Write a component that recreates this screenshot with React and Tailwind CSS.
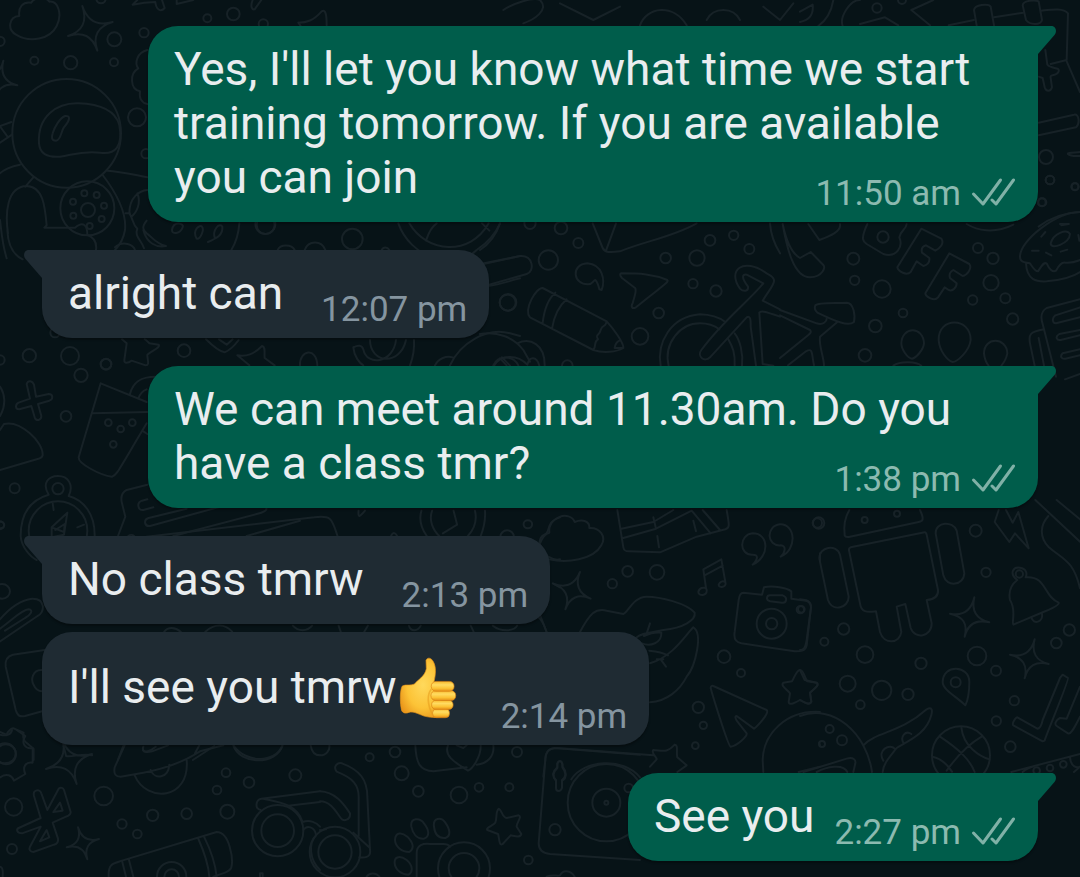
import React from "react";

const layers = [
  {
    at: "translate(0 0) scale(.33333)",
    circles: [[343,118,21],[432,98,14],[212,188,20],[103,182,12],[342,187,12],[622,55,12],[700,42,19],[790,72,14],[411,352,27],[438,461,14],[0,124,14],[797,675,27],[200,400,163],[262,625,81],[264,630,21],[253,580,9],[290,585,9],[312,617,9],[305,657,9],[269,678,9],[220,647,9],[219,605,9],[303,-4,14]],
    sparks: [[247,18,338,66,292,152,204,108],[10,182,52,256,-20,310,-60,220]],
    paths: [
      "M58 48C25 50 22 90 48 104C90 130 150 118 170 78C188 42 174 2 148 5C132-16 100-4 94 8C68 4 54 22 58 48Z",
      "M117 430C112 350 170 308 235 310C300 312 345 330 358 375C370 440 345 465 300 458C240 452 215 466 180 470C140 473 119 460 117 430Z",
      "M158 400C164 380 180 354 195 348C214 346 208 362 195 378C182 390 185 420 168 422C154 422 154 412 158 400Z",
      "M60 494C30 500 10 510 0 520M100 532L76 560M24 700C15 640 20 560 80 558C130 560 135 620 140 676L133 683H225C250 662 262 675 262 705C290 715 290 735 288 750M22 690C24 740 40 765 68 778M0 660C4 690 6 730 20 775",
      "M308 525C350 580 380 640 375 690C370 720 355 740 345 750M322 512C360 514 400 524 442 532M0 378L34 366M2 382L24 412M0 428L36 404",
      "M442 150C410 158 403 190 415 205C388 220 390 268 420 274C416 300 430 310 442 312",
      "M442 570C420 572 388 590 388 640C402 660 395 670 412 686C402 710 425 720 432 745M412 580C425 610 408 640 394 650M376 640H390M440 662C425 680 428 690 440 700C458 712 465 730 498 738C470 744 440 730 430 690M345 742C370 720 400 735 405 750",
      "M516 690C520 660 555 670 548 682C540 702 515 704 516 690ZM590 716C575 690 600 672 606 680C614 690 600 720 590 716ZM645 715C635 690 660 665 667 680C670 705 650 715 624 726M718 670C716 700 706 730 694 750",
      "M398 14L412 0M398 14C425 8 450 6 466 6C468 28 482 38 494 24L486 0M530 0V12L580 0M758 0C750 20 756 30 764 28L784 0M895 68C920 68 940 62 965 34C976 28 980 40 980 76M895 68L902 78",
    ],
  },
  {
    at: "translate(100 210) scale(.33333)",
    circles: [[757,87,31],[496,42,30],[252,422,19],[18,463,16],[1223,278,24]],
    sparks: [],
    paths: [
      "M533 120C540 102 575 102 584 120M614 120C625 90 665 90 676 120M845 120C850 110 862 110 868 120",
      "M895 40C930 140 1060 190 1130 120C1160 100 1185 75 1200 40M928 40C980 130 1110 140 1166 40M978 92C985 70 995 50 1010 40M1146 40L1168 62",
      "M1150 162L1260 138M1164 228C1200 224 1230 212 1260 205",
      "M66 388L80 400L73 450C72 462 84 460 95 452L137 466C150 466 142 450 142 434C160 420 182 412 176 404L148 400C140 392 136 388 134 388",
      "M318 388C340 410 360 425 374 427C390 420 405 405 416 390M357 388L380 404L398 388",
      "M412 436C440 440 460 434 486 408C498 410 492 430 494 444L524 466M412 436L448 466",
      "M600 466C598 420 650 410 652 466M760 412C775 405 785 405 790 418C800 470 880 460 888 390M810 390C810 460 900 470 918 390M760 412C762 440 780 460 790 466M942 390C944 420 938 445 930 466",
      "M1050 466C1080 400 1160 350 1230 370L1260 378M1005 466C1015 445 1040 436 1058 442M1180 466C1195 435 1240 435 1255 466M1200 445L1220 466",
    ],
  },
  {
    at: "translate(480 220) scale(.33333)",
    circles: [[205,120,29],[84,247,25],[243,24,19],[295,69,15],[557,114,16],[651,114,23],[690,61,16],[761,46,14],[808,87,15],[639,191,14],[708,213,17],[536,279,16],[480,349,25],[150,10,17],[262,437,16]],
    sparks: [],
    paths: [
      "M12 130L120 108C160 104 165 155 140 162L25 195M0 90C30 70 50 40 60 10",
      "M338 10L368 84C374 98 390 98 420 94C500 62 580 50 650 10M408 10L378 92",
      "M365 210C376 180 368 134 322 130C270 134 280 195 325 193C338 193 340 180 346 180C354 188 356 200 358 208Z",
      "M424 160C480 160 520 162 562 180C570 186 530 210 468 262C456 268 452 260 458 250C464 225 470 215 466 205L426 174C418 165 420 161 424 160Z",
      "M188 204C168 202 130 270 150 292L340 390C370 400 410 396 430 384C432 370 400 325 380 304ZM226 218C200 240 192 275 188 308M260 238C232 262 222 290 216 326M380 304C376 325 368 310 362 330C358 350 344 340 354 358C340 365 350 378 340 390M430 384L404 384C406 370 410 366 418 362",
      "M542 437C530 370 570 290 660 283C700 284 720 294 736 306M786 437C790 400 780 360 764 340M566 437C550 370 600 310 660 310C690 310 705 318 718 328M764 437C766 400 758 380 744 356",
      "M850 190C810 240 730 300 664 390C650 410 674 428 690 412L800 292C814 284 812 310 812 320L828 437M850 190L800 164C784 162 786 176 804 200C806 215 790 216 780 206C740 150 790 110 860 160C900 180 880 190 848 242L900 268M838 278C842 272 850 272 900 290M838 278L848 432L880 437",
      "M870 10C872 40 882 70 900 100M0 342C50 334 100 350 130 390L150 425M112 370C150 352 195 372 194 437M42 437C60 405 110 400 142 434C148 408 170 408 178 437M66 412L90 437",
    ],
  },
  {
    at: "translate(780 180) scale(.33333)",
    circles: [[220,236,18],[224,301,14],[306,327,26],[309,171,17],[369,399,13],[286,438,19],[255,526,19],[594,204,15],[639,235,17],[633,308,23],[676,355,15],[578,360,14],[698,417,17],[785,67,12],[885,20,10],[810,0,13]],
    sparks: [],
    paths: [
      "M8 132C20 200 40 292 90 292C130 290 136 262 130 255L92 216L60 234C35 220 18 180 8 132ZM85 132L118 180C150 168 184 155 180 132",
      "M262 132C240 180 250 185 260 192L310 222C350 234 370 200 358 172C362 150 378 150 380 132",
      "M424 146L484 176C494 190 480 204 466 212L438 196C424 200 424 210 426 218L448 234C450 250 438 256 430 258L410 244L392 276C380 288 355 275 352 262Z",
      "M508 220L568 252C578 266 560 286 548 288L520 270C506 278 508 288 510 294L530 310C530 325 515 335 506 330L494 322L474 352C464 366 436 350 436 340Z",
      "M560 132C590 150 640 164 700 134M900 96C830 96 720 180 720 230C720 250 740 246 750 250C758 262 765 274 774 274C785 258 790 246 800 250C808 268 818 278 828 272C838 254 845 246 856 248C880 250 890 244 900 240M738 250C740 300 770 306 800 304C840 300 880 290 900 276M812 190C820 160 860 145 870 162C868 190 812 212 812 190ZM784 170L796 156M840 132H866M756 212H776M798 218L814 226M842 215L862 209M895 165L898 182",
      "M0 390L110 430C130 436 140 424 140 416M0 406L90 450C96 456 90 460 86 464L0 534M172 426L120 470C116 500 132 530 132 558M24 556L78 514C100 502 94 520 102 556",
      "M106 376C116 366 160 370 200 368C222 368 226 410 222 426C205 440 170 426 112 398C104 390 102 384 106 376Z",
      "M364 490C366 438 430 438 432 490C430 510 408 534 396 536C382 534 364 508 364 490ZM476 480C474 410 572 410 572 480C568 515 530 546 518 546C502 542 478 512 476 480ZM612 520C612 470 680 470 682 520C678 540 670 550 664 557M612 520C614 540 620 550 626 557M340 557C360 542 410 544 424 557",
      "M900 358L800 384C780 396 784 420 788 432L828 590M900 382L826 406C814 416 818 430 828 430L900 412M900 450L838 462C824 470 830 482 842 480L900 466M900 508L848 520C838 530 846 538 856 536L900 526M792 448C750 456 745 462 750 490L764 557M776 474L792 557M855 598L900 582",
    ],
  },
  {
    at: "translate(800 0) scale(.33333)",
    circles: [[231,24,14],[306,0,12],[738,471,21],[750,540,13],[825,560,11],[727,607,12]],
    sparks: [],
    paths: [
      "M0 35L38 14C42 50 20 62 0 66M100 0C95 30 80 60 55 78M128 78C118 50 150 0 180 0M180 72L255 52L295 76M334 30L400 0M334 30L390 76M446 76L522 60M582 52L670 38M724 32C760 28 790 24 804 40L800 180L752 192M446 76",
      "M530 76L522 30C524 14 565 10 572 20L582 76M678 60L668 16C670 0 705 0 716 4L726 60C722 76 690 76 678 60Z",
      "M736 150L742 194C754 208 780 200 776 214C772 230 748 220 752 234L756 262C752 276 738 276 734 262L728 234L716 230M800 184L840 276M716 368L822 344C838 340 840 372 828 382L716 406M840 456C820 458 800 458 804 462C812 470 830 468 840 468M716 680C760 646 800 638 840 636M784 676L806 672",
      "M-890 30C-860 10-800-10-780 0C-750 30-800 60-830 70M-720 10L-620 60L-540 20M-480 76C-460 20-380 10-340 76M-280 60C-260 20-200 20-180 60M-110 20L-60 60L-20 10",
    ],
  },
  {
    at: "translate(0 330) scale(.33333)",
    circles: [[88,77,20],[210,78,27],[243,136,20],[318,102,16],[0,90,14],[198,259,16],[325,278,10],[362,297,10],[397,278,10],[340,343,10],[44,475,15],[0,586,12],[174,476,17],[174,602,88],[165,8,14]],
    sparks: [],
    paths: [
      "M80 162C85 148 98 154 102 164L108 200L146 192C160 192 160 208 148 212L114 222L124 258C124 272 108 274 104 262L94 228L58 238C44 238 46 222 56 218L90 206Z",
      "M302 160L440 216M302 160L236 382C234 400 300 436 336 440C350 436 350 430 440 280M278 250L442 246M390 192C400 150 430 140 466 140M416 204C420 190 430 182 440 178M430 304L442 312",
      "M0 170C14 190 20 225 0 258M0 300L12 282C60 270 130 335 128 376C126 384 120 386 110 388L0 420",
      "M146 494C125 460 145 438 174 438C205 438 222 465 206 498C250 510 285 550 284 618M146 494C90 510 62 550 62 618C64 650 90 680 110 690M158 520L161 540M232 592L252 584M155 592L202 548L192 614L155 622ZM155 592L192 606L194 582L166 600",
      "M442 464L380 480C362 490 362 505 366 520L376 560L354 618M442 508L426 512C408 518 414 542 430 540L460 532M446 564L560 536M446 564C430 568 432 590 450 588L770 500M520 618L770 552C790 548 804 540 798 532M740 618L900 572M385 618C390 614 398 614 402 618",
    ],
  },
  {
    at: "translate(540 500) scale(.33333)",
    circles: [[263,214,16],[217,251,14],[351,217,22],[832,69,14],[552,470,19],[603,519,12],[475,622,17],[490,676,11],[466,737,10],[695,371,45],[695,371,17],[781,329,11]],
    sparks: [[120,216,152,296,76,328,40,251]],
    paths: [
      "M0 130C8 110 18 100 28 98C22 50 90 30 104 66C128 56 150 64 148 84C180 82 200 110 184 136C160 180 80 190 28 178",
      "M232 30L250 142C252 152 256 154 266 154L360 157L470 110L556 88C570 84 568 76 560 30M244 86L340 66L400 30M250 114L348 86L455 32L512 100M340 52L348 86M352 108L357 142M460 62L468 94M488 30L540 90",
      "M638 194C690 170 688 100 638 100C596 104 596 166 638 164C658 164 652 180 638 194ZM722 170C772 150 768 72 720 73C676 78 680 140 722 136C740 136 736 158 722 170Z",
      "M498 264L490 208L544 178L556 246M494 226L548 197M498 264C510 286 475 292 475 276C478 262 490 262 498 264ZM556 246C562 262 536 266 536 254C540 244 548 242 556 246",
      "M120 396C150 340 166 324 200 332L250 342C264 338 280 290 320 290C360 290 440 310 464 338C468 360 430 384 370 390C330 398 300 400 290 412M330 370L318 406M364 398C366 430 330 440 306 430M312 408C330 400 350 396 364 398M330 490C400 470 440 400 460 382C490 400 466 500 440 530C420 570 380 604 330 607M328 452C350 454 370 458 384 466M362 478L378 500M350 478H370",
      "M610 278L666 284L672 262C700 256 740 264 754 274V296L798 302C814 308 814 320 812 330L800 436C796 456 776 454 764 454L604 430C582 426 582 408 584 396L596 300C598 284 604 278 610 278ZM690 286H728C744 292 740 310 726 308L690 304C676 300 680 286 690 286Z",
      "M780 510C792 510 796 540 802 544L830 548C840 556 818 570 810 578L814 604C810 618 792 606 780 600C766 608 748 618 746 606L750 580C742 570 720 556 730 548L756 544C764 530 770 510 780 510Z",
      "M520 558L680 630C690 640 650 680 642 686L590 648C584 648 586 654 590 662L620 700C622 710 590 738 572 740C564 738 516 580 512 564C512 558 516 556 520 558Z",
      "M404 734C416 734 408 760 412 772L440 796L412 816M404 734C380 760 370 752 340 750C332 760 350 770 350 778L330 800M340 766L50 744C26 744 16 756 16 780L10 830M94 838C130 780 250 770 300 832M52 790C60 776 68 784 68 800C84 820 76 836 70 840M52 790V804C36 820 40 830 46 840",
      "M668 780C670 700 740 630 840 636M670 816L668 780M776 816L840 800M838 728L840 736M0 345L20 396M840 160V184",
    ],
  },
  {
    at: "translate(800 500) scale(.33333)",
    circles: [[56,69,17],[194,60,9],[291,41,9],[527,92,18],[558,217,14],[131,387,17],[73,425,12],[195,464,25],[363,490,17],[531,468,28],[588,512,15],[143,551,24],[245,571,29],[324,583,17],[181,614,13],[643,602,14],[589,663,14],[631,740,16],[808,390,17],[769,429,16],[467,547,15],[89,687,12],[126,721,15],[66,732,9],[658,222,11],[483,766,87],[750,804,10],[790,793,10],[710,812,10],[4,328,10]],
    sparks: [[523,292,568,367,494,410,450,341],[704,418,746,492,674,535,630,464]],
    paths: [
      "M148 30C130 60 132 90 134 106C136 112 140 112 150 110L356 66C368 64 374 60 360 30",
      "M374 97L152 142C146 144 146 150 148 156L180 310C184 340 204 336 228 334L240 396C252 436 300 430 304 396L290 320L316 312L332 384C344 420 396 410 395 370L380 300C400 298 416 290 414 270L380 104C378 98 376 96 374 97Z",
      "M58 176C56 140 110 130 120 164L146 290C146 324 98 338 84 300ZM407 100C406 64 460 62 470 92L493 220C492 256 440 264 430 226Z",
      "M596 30L584 66L628 126L645 100L686 145L655 36L638 68L618 30M706 0L840 125M770 0L840 58M745 48C720 76 718 110 745 140C790 180 820 180 840 265",
      "M652 240C626 220 640 200 660 203C680 206 682 222 677 232C740 226 730 290 776 308C780 316 740 332 730 336L640 374C634 368 650 330 630 300C624 270 636 252 652 240ZM694 352C700 376 730 366 726 342",
      "M496 616C470 590 428 570 428 546C430 490 508 496 508 546C508 580 504 600 496 616Z",
      "M788 524L804 534C808 540 736 710 734 722L728 724L640 676C634 670 648 652 652 652L712 686C722 686 726 670 728 660L780 534ZM840 560L800 656L780 654C764 662 764 674 770 678L804 700C812 704 820 690 840 650",
      "M0 510L14 540L50 548C62 556 36 570 30 578L34 606C30 618 10 606 0 600M0 298C30 300 36 310 32 330L20 420C16 446 10 450 0 450",
      "M0 648C100 610 200 700 216 816M190 736C230 694 300 700 380 628C396 620 398 630 394 645C380 700 330 720 290 744C270 770 250 790 248 816M310 728C300 710 316 690 334 702M250 782C230 750 270 730 284 746M10 816L140 776C160 770 168 780 166 790L160 816M50 816C80 800 130 790 142 816",
      "M420 710C480 750 510 780 524 816M484 682C490 740 540 770 568 778M545 710C510 730 470 770 440 812M398 770C420 775 440 790 456 815M634 816L840 762M810 772C812 800 830 805 840 800M668 816C680 805 695 800 705 798M822 816L840 800",
    ],
  },
  {
    at: "translate(0 490) scale(.35714 .33333)",
    circles: [[6,304,22],[1478,103,12],[1420,140,19],[14,790,30],[2,105,10]],
    sparks: [],
    paths: [
      "M0 388C30 350 60 330 90 326C130 325 125 370 105 378L0 454M0 416C40 385 60 360 80 358C96 360 84 376 70 384L14 422",
      "M125 480L36 494C16 500 14 515 16 530L44 660C50 680 56 680 70 678L118 664M118 540C90 538 86 570 94 584C100 600 110 604 118 604",
      "M0 726L18 734C24 720 36 712 40 716L66 728C62 745 70 756 76 760L94 776V810M178 768L185 798C200 802 230 790 258 796M330 810L345 768M400 780C404 790 420 784 436 770M540 810L600 768M655 768C690 820 770 820 790 768",
      "M410 140L880 82C930 74 930 90 945 138M1004 62C1002 86 1008 80 1022 62M1180 62C1172 90 1180 115 1195 138M1210 62C1200 90 1212 120 1230 138M1270 62L1280 104L1240 130M1330 62C1336 90 1330 115 1310 138M1358 62C1360 90 1356 110 1346 138M1568 82C1530 95 1540 120 1530 130C1510 140 1512 150 1510 165M1535 200C1550 210 1560 210 1568 208M1095 138C1100 126 1106 126 1112 138",
      "M460 425C470 410 490 410 506 425M575 425C600 400 630 400 650 425M820 407C835 425 860 425 874 407M948 407L954 425M1030 407L1020 425M1145 407C1150 425 1170 425 1178 407M1318 407L1326 425M1380 407C1400 425 1440 425 1448 407M1505 380C1520 390 1525 410 1530 425M1548 280L1568 292",
    ],
  },
  {
    at: "translate(0 730) scale(.33333)",
    circles: [[18,73,30],[41,231,26],[311,198,28],[36,357,15],[366,282,14],[412,312,13],[458,256,17],[560,251,16],[678,128,13],[747,157,16],[651,180,13],[682,245,21],[886,136,18],[833,302,49],[833,302,77],[515,440,44],[515,440,22]],
    sparks: [[186,25,276,72,230,162,138,117],[234,292,297,327,262,388,200,352]],
    paths: [
      "M0 142C20 128 36 136 42 152L76 132C66 110 78 94 98 98V54C76 58 62 40 76 18L50 0M0 14C20 20 34 12 36 0",
      "M108 182C116 178 122 184 124 190L142 240L176 176C182 170 190 174 192 180L212 246C212 256 204 258 198 260L158 278L174 326C176 338 170 342 162 344L100 366C90 366 86 358 90 350L122 290L66 310C50 310 48 298 56 294L122 264L102 198C100 190 102 184 108 182ZM160 246L180 218L188 242ZM120 334L140 300L148 322Z",
      "M374 46L344 112C340 134 348 140 362 140L430 128C500 115 560 90 600 64L670 46M404 136C440 220 570 210 560 90M452 120C464 150 505 146 508 104M430 50C424 66 440 68 456 64L504 46M585 70L598 46M700 46C720 106 830 106 848 46M932 46C935 66 945 76 960 76",
      "M326 440C324 400 340 400 366 392L650 306C690 306 700 390 694 412C690 425 670 430 640 440M366 392L378 440M386 386L400 440M594 324C610 360 625 400 628 440M612 320C632 360 646 400 650 440M0 410C12 412 8 430 8 440M780 440V430H788V440",
      "M782 240C764 236 766 210 784 206L960 184M790 206C830 215 890 220 908 276C930 268 950 278 960 290M858 228L960 216M910 300C920 284 945 290 948 316C925 340 928 390 960 420",
    ],
  },
  {
    at: "translate(320 730) scale(.33333)",
    circles: [[149,82,12],[225,66,16],[245,130,21],[295,184,16],[417,195,25],[477,172,13],[568,172,12],[591,66,15],[45,366,50],[45,366,76],[625,390,13],[705,299,17],[859,218,116],[859,218,42],[859,218,6],[432,415,78],[432,415,46],[926,174,13]],
    sparks: [],
    paths: [
      "M50 125C38 110 52 96 66 100C120 120 142 150 142 200L150 360C154 384 130 384 118 382M50 125C100 145 116 165 116 200V318M0 184C45 186 70 220 90 250C92 270 70 276 62 264C45 240 30 214 0 214M100 308L150 354M0 300C8 304 12 296 18 298M0 76C20 76 30 60 28 46",
      "M286 46C288 100 300 122 340 124L440 112M520 46C524 80 500 102 470 104M384 46C370 80 410 100 444 122C456 118 484 80 482 46M410 46L430 54L440 46",
      "M274 290C270 262 300 262 312 280C328 300 330 320 312 326C290 328 278 310 274 290ZM342 290C338 262 364 260 376 278C390 298 394 318 376 324C354 326 344 310 342 290ZM225 330C226 305 246 306 262 320C280 338 284 356 268 366C245 366 226 350 225 330ZM224 400C222 376 244 378 260 390C278 405 280 425 266 434C245 434 226 420 224 400ZM290 440V370C290 344 310 340 330 342H370C382 342 386 344 390 350",
      "M536 236C546 240 546 262 560 264L596 256C608 260 588 280 590 290L604 312C602 324 584 318 572 316L548 342C536 350 538 320 534 312L502 300C496 294 520 286 526 278C532 262 526 244 536 236Z",
      "M960 74L704 54C686 56 676 70 676 88L656 340C656 362 670 370 690 372L960 390M712 104C714 88 726 92 727 104V112C738 126 740 140 726 150V174C722 186 708 186 708 174V150C694 138 698 124 712 112ZM140 440C148 426 170 428 178 440M680 440C700 432 712 440 720 436C728 418 752 420 764 440",
    ],
  },
];

function sparkPath([a, b, c, d, e, f, g, h]) {
  const x = (a + c + e + g) / 4;
  const y = (b + d + f + h) / 4;
  return `M${a} ${b}Q${x} ${y} ${c} ${d}Q${x} ${y} ${e} ${f}Q${x} ${y} ${g} ${h}Q${x} ${y} ${a} ${b}Z`;
}

function Wallpaper() {
  return (
    <svg
      aria-hidden="true"
      viewBox="0 0 1080 877"
      preserveAspectRatio="xMidYMin slice"
      className="pointer-events-none absolute inset-0 h-full w-full"
      fill="none"
      stroke="#172227"
      strokeWidth="2"
      strokeLinecap="round"
      strokeLinejoin="round"
    >
      {layers.map((layer, i) => (
        <g key={i} transform={layer.at}>
          {layer.paths.map((d, j) => (
            <path key={j} d={d} vectorEffect="non-scaling-stroke" />
          ))}
          {layer.sparks.map((s, j) => (
            <path key={j} d={sparkPath(s)} vectorEffect="non-scaling-stroke" />
          ))}
          {layer.circles.map(([cx, cy, r], j) => (
            <circle key={j} cx={cx} cy={cy} r={r} vectorEffect="non-scaling-stroke" />
          ))}
        </g>
      ))}
    </svg>
  );
}

function Ticks() {
  return (
    <svg
      role="img"
      aria-label="Delivered"
      viewBox="0 0 44 30"
      className="ml-[10px] inline-block h-[30px] w-[44px] align-[-2px]"
      fill="none"
      stroke="#80b1a7"
      strokeWidth="3"
      strokeLinecap="round"
      strokeLinejoin="round"
    >
      <path d="M2.5 17L12 27L29.5 3" />
      <path d="M21 23L25 27L42.500 3" />
    </svg>
  );
}

function ThumbsUp() {
  return (
    <svg
      role="img"
      aria-label="thumbs up"
      viewBox="57 48 174 188"
      className="ml-[2px] mr-[6px] inline-block h-[62px] w-[58px] align-[-16px]"
    >
      <defs>
        <radialGradient id="palm" cx="55%" cy="45%" r="65%">
          <stop offset="0" stopColor="#ffd95c" />
          <stop offset=".6" stopColor="#fcc336" />
          <stop offset="1" stopColor="#e9941a" />
        </radialGradient>
        <linearGradient id="finger" x1="0" y1="0" x2="0" y2="1">
          <stop offset="0" stopColor="#f9b92b" />
          <stop offset=".35" stopColor="#ffdc62" />
          <stop offset=".7" stopColor="#fcc335" />
          <stop offset="1" stopColor="#e58d16" />
        </linearGradient>
      </defs>
      <path
        d="M66 136C76 130 92 136 103 130C112 118 134 108 139 84L138 58C142 48 154 50 160 62C169 78 168 98 162 124L182 140L185 228C172 234 146 231 132 227C112 220 100 212 86 216C74 221 66 216 64 210C59 190 58 150 66 136Z"
        fill="url(#palm)"
        stroke="#e69419"
        strokeWidth="2"
      />
      <path d="M154 146C142 160 140 190 158 222" fill="none" stroke="#e59a1c" strokeWidth="5" opacity=".55" />
      <g fill="url(#finger)" stroke="#db8416" strokeWidth="2">
        <rect x="158" y="205" width="51" height="27" rx="12" />
        <rect x="155" y="179" width="65" height="28" rx="13" />
        <rect x="153" y="150" width="75" height="30" rx="14" />
        <rect x="154" y="122" width="69" height="30" rx="14" />
      </g>
    </svg>
  );
}

function Message({ outgoing, tail, tall, time, children }) {
  const side = outgoing
    ? "self-end bg-[#005d4b] pr-[23px]"
    : "self-start bg-[#1f2b33] pr-[22px]";
  const corner = !tail ? "" : outgoing ? "rounded-tr-none" : "rounded-tl-none";
  return (
    <article
      className={`relative max-w-[890px] rounded-[30px] pt-4 pb-[18px] pl-[26px] shadow-[0_2px_2px_rgba(0,0,0,0.3)] ${side} ${corner}`}
    >
      {tail && (
        <svg
          aria-hidden="true"
          viewBox="0 0 18 28"
          className={`absolute top-0 h-[28px] w-[18px] ${
            outgoing ? "left-full text-[#005d4b]" : "right-full -scale-x-100 text-[#1f2b33]"
          }`}
          fill="currentColor"
        >
          <path d="M0 0H13.500C17.500 0 19.500 5 16.500 9L0 28Z" />
        </svg>
      )}
      <p className={`text-[46px] text-[#e9edef] ${tall ? "leading-[79px]" : "leading-[54px]"}`}>
        {children}
        <span
          className={`float-right -mb-3 whitespace-nowrap text-[35px] leading-[41px] ${
            outgoing ? "ml-[20px] text-[#8cbab0]" : "ml-[38px] text-[#8595a0]"
          } ${tall ? "mt-[48px]" : "mt-[23px]"}`}
        >
          <time>{time}</time>
          {outgoing && <Ticks />}
        </span>
      </p>
    </article>
  );
}

export default function App() {
  return (
    <div className="relative min-h-screen overflow-hidden bg-[#071317] font-['Roboto',sans-serif]">
      <Wallpaper />
      <main className="relative flex flex-col gap-7 px-[42px] pt-[26px] pb-4">
        <Message outgoing tail time="11:50 am">
          Yes, I'll let you know what time we start training tomorrow. If you are available you can join
        </Message>
        <Message tail time="12:07 pm">alright can</Message>
        <Message outgoing tail time="1:38 pm">
          We can meet around 11.30am. Do you have a class tmr?
        </Message>
        <section className="flex flex-col gap-2">
          <Message tail time="2:13 pm">No class tmrw</Message>
          <Message tall time="2:14 pm">
            I'll see you tmrw
            <ThumbsUp />
          </Message>
        </section>
        <Message outgoing tail time="2:27 pm">See you</Message>
      </main>
    </div>
  );
}
